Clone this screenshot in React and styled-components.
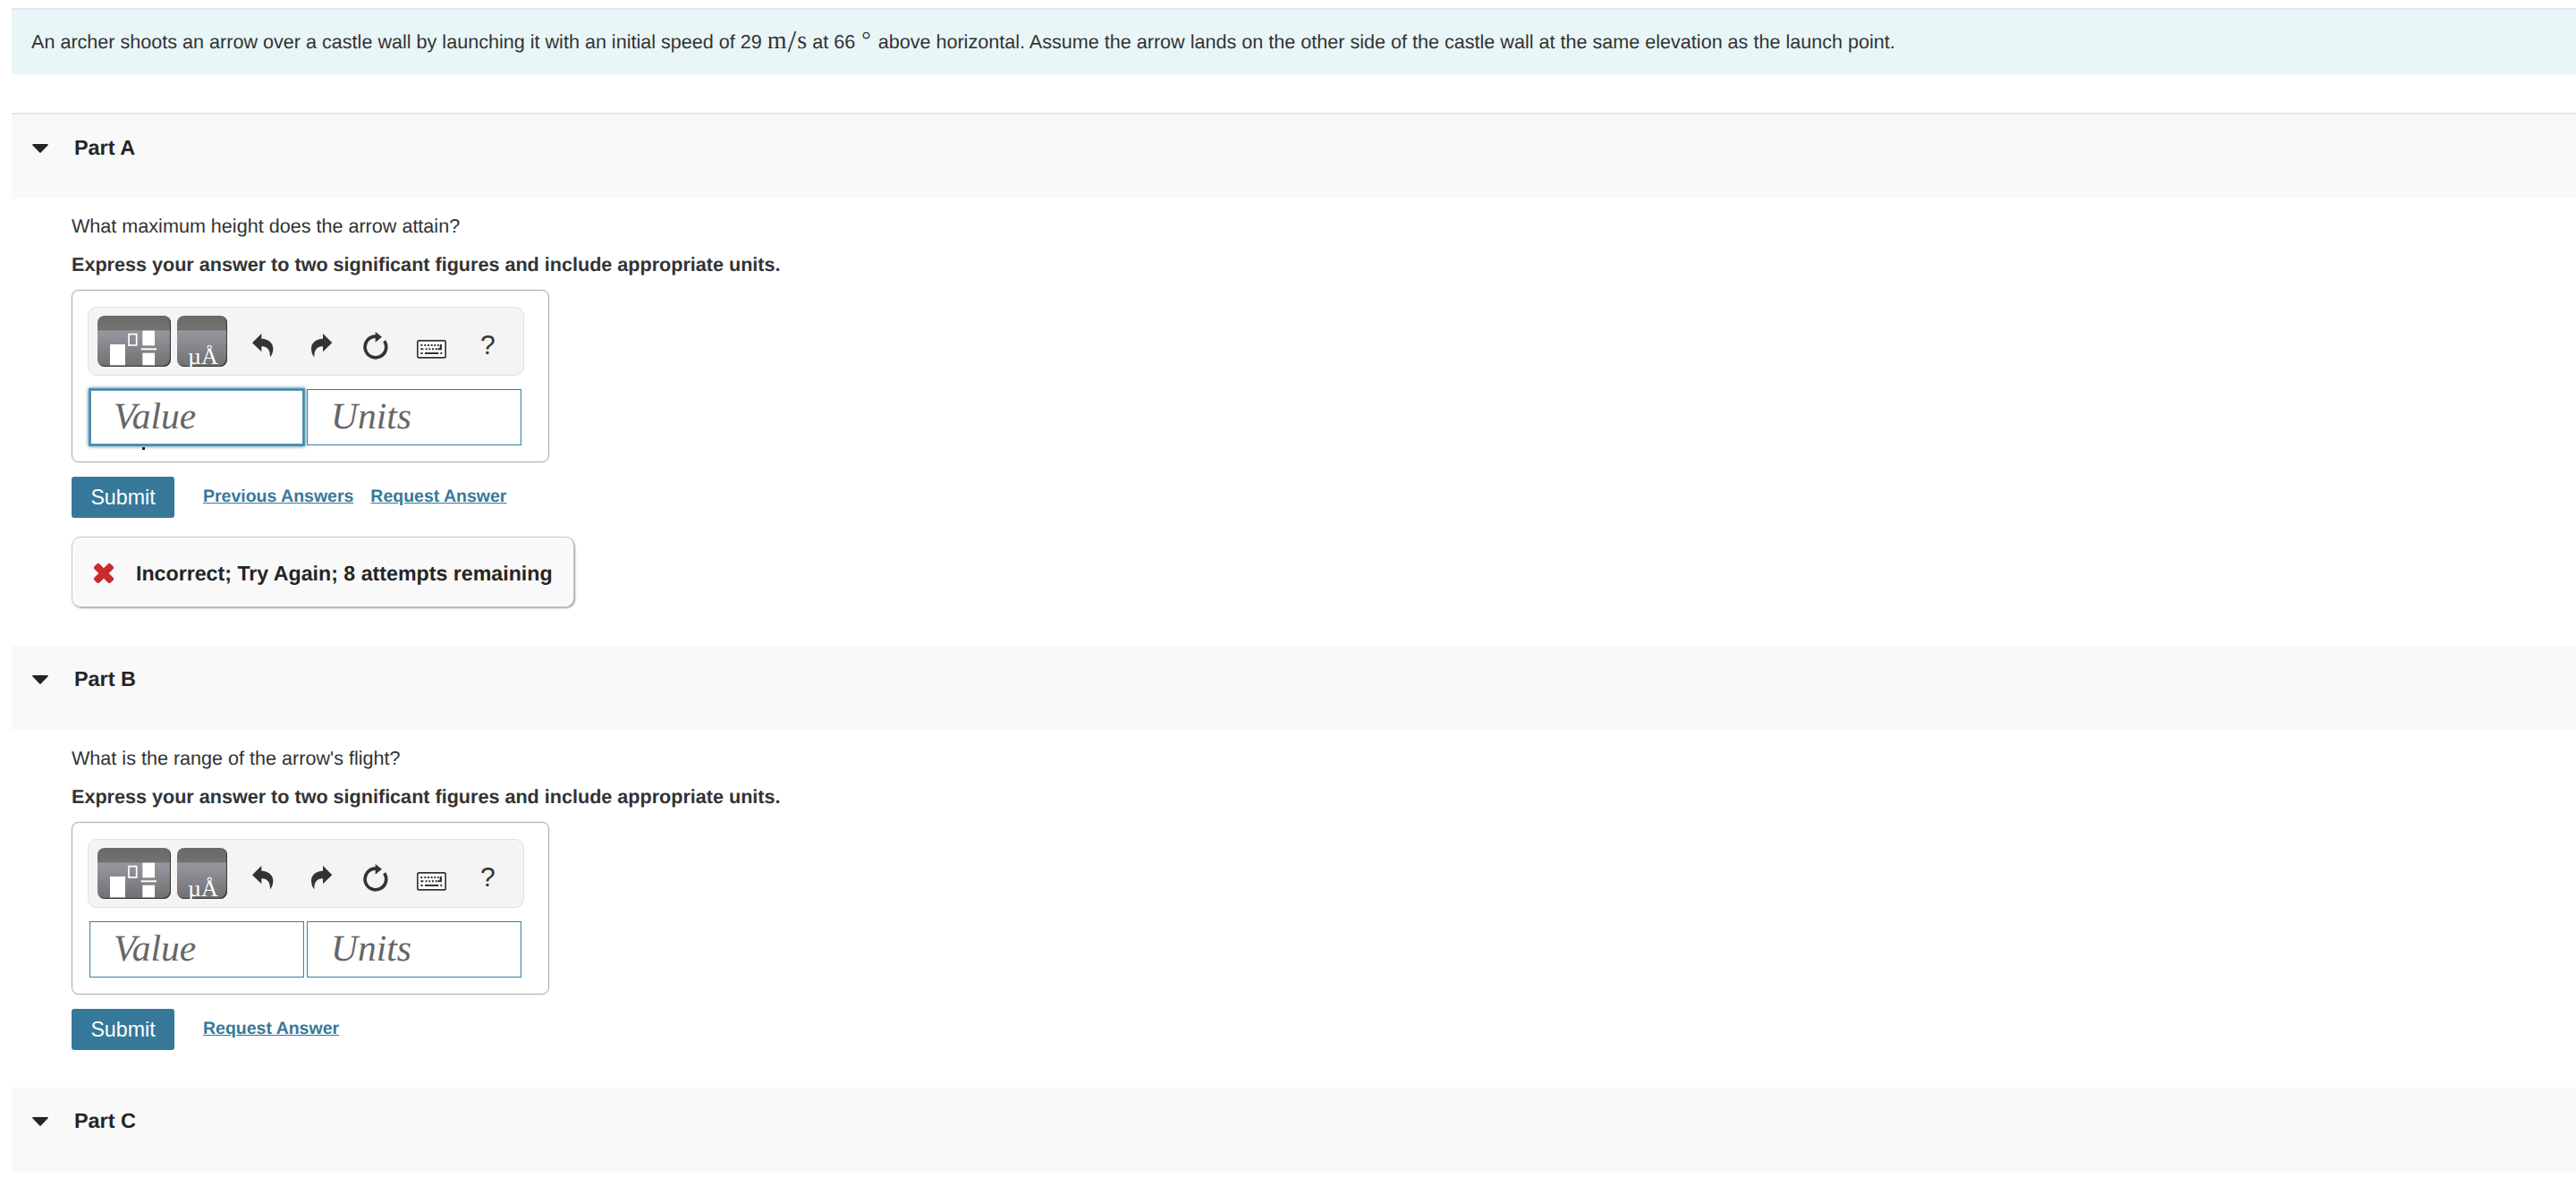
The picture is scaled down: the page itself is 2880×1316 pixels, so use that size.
import React from 'react'
import styled, { createGlobalStyle } from 'styled-components';

const parts = [
    {
        id: 'A',
        question: 'What maximum height does the arrow attain?',
        focused: true,
        links: ['Previous Answers', 'Request Answer'],
        feedback: 'Incorrect; Try Again; 8 attempts remaining',
    },
    {
        id: 'B',
        question: "What is the range of the arrow's flight?",
        focused: false,
        links: ['Request Answer'],
    },
    { id: 'C' },
];

function App() {
  return (
    <Page>
      <GlobalStyle />
      <Problem>
        An archer shoots an arrow over a castle wall by launching it with an initial speed of 29{' '}
        <Unit>m<Slash>/</Slash>s</Unit> at 66 <Degree>°</Degree> above horizontal. Assume the arrow
        lands on the other side of the castle wall at the same elevation as the launch point.
      </Problem>
      {parts.map((part, i) => (
        <Part key={part.id} part={part} first={i === 0} />
      ))}
    </Page>
  )
}

function Part({ part, first }) {
  return (
    <section>
      <PartHeader $line={first}>
        <Caret viewBox="0 0 18 10"><path d="M1 0H17Q18.2 0.4 17.5 1.4L9.8 9.4Q9 10.2 8.2 9.4L0.5 1.4Q-0.2 0.4 1 0Z" /></Caret>
        <h2>Part {part.id}</h2>
      </PartHeader>
      {part.question && (
        <PartBody $first={first}>
          <p>{part.question}</p>
          <Instruction>Express your answer to two significant figures and include appropriate units.</Instruction>
          <AnswerBox>
            <Toolbar />
            <Fields>
              <Field $focused={part.focused}>Value</Field>
              <Field>Units</Field>
              {part.focused && <Dot />}
            </Fields>
          </AnswerBox>
          <Actions>
            <Submit>Submit</Submit>
            {part.links.map((link) => (
              <Link key={link} href="#">{link}</Link>
            ))}
          </Actions>
          {part.feedback && (
            <Feedback>
              <Cross viewBox="0 0 22 22">
                <rect x="-1.8" y="7" width="25.6" height="8" rx="2" transform="rotate(45 11 11)" />
                <rect x="-1.8" y="7" width="25.6" height="8" rx="2" transform="rotate(-45 11 11)" />
              </Cross>
              {part.feedback}
            </Feedback>
          )}
        </PartBody>
      )}
    </section>
  )
}

function Toolbar() {
  return (
    <Tools>
      <Palette $width={82}>
        <svg width="82" height="57" viewBox="0 0 246 171" fill="#fff">
          <rect x="42" y="96" width="51" height="70" />
          <rect x="105" y="62" width="26" height="37" fill="none" stroke="#fff" strokeWidth="5" />
          <rect x="151" y="50" width="41" height="50" />
          <rect x="146" y="109" width="52" height="6" />
          <rect x="151" y="125" width="41" height="41" />
        </svg>
      </Palette>
      <Palette $width={56}><Symbols>µÅ</Symbols></Palette>
      <ToolIcon $left={21} $top={29} width="24" height="27" viewBox="0 0 72 81">
        <path d="M0 31L31 0V17C55 17 70 32 70 50C70 62 66 72 60 79C60 60 56 44 31 43V61Z" />
      </ToolIcon>
      <ToolIcon $left={42} $top={29} width="24" height="27" viewBox="0 0 72 81">
        <path d="M70 31L39 0V17C15 17 0 32 0 50C0 62 4 72 10 79C10 60 14 44 39 43V61Z" />
      </ToolIcon>
      <ToolIcon $left={34} $top={27} width="28" height="31" viewBox="0 0 84 93">
        <path d="M71 31A35.5 35.5 0 1 1 42 15.5" fill="none" stroke="#333" strokeWidth="11" />
        <path d="M41 0L63 17L41 35Z" />
      </ToolIcon>
      <ToolIcon $left={32} $top={36} width="33" height="21" viewBox="0 0 99 63">
        <rect x="2.5" y="2.5" width="94" height="57" rx="5" fill="#fff" stroke="#333" strokeWidth="5" />
        <path d="M13 15h6v6h-6zM25 15h6v6h-6zM36 15h6v6h-6zM47 15h6v6h-6zM58 15h6v6h-6zM69 15h5v6h-5zM77 15h7v19h-14v-6h7z" />
        <path d="M13 28h9v6h-9zM29 28h6v6h-6zM40 28h6v6h-6zM51 28h6v6h-6zM62 28h6v6h-6z" />
        <path d="M13 42h7v6h-7zM27 42h46v6h-46zM79 42h6v6h-6z" />
      </ToolIcon>
      <Help>?</Help>
    </Tools>
  )
}

const GlobalStyle = createGlobalStyle`
  *{
    box-sizing: border-box;
  }
  body{
    margin: 0;
    background: white;
    color: #333;
    font-family: "Liberation Sans", Arial, sans-serif;
    font-size: 21.58px;
    line-height: 30px;
    text-rendering: geometricPrecision;
  }
  p, h2{
    margin: 0;
  }
`;

const Page = styled.main`
  min-height: 1316px;
  padding: 9px 0 0 13px;
`;

const Problem = styled.div`
  height: 74px;
  margin-bottom: 43px;
  padding: 21px 22px;
  background: #e9f6f7;
  border-top: 2px solid #dfe8e8;
`;

const Unit = styled.span`
  font-family: "Liberation Serif", serif;
  font-size: 28px;
  line-height: 0;
`;

const Slash = styled.span`
  display: inline-block;
  margin: 0 1px;
  font-size: 35px;
  line-height: 0;
  transform: translateY(4px);
`;

const Degree = styled.span`
  display: inline-block;
  margin: 0 2px 0 1px;
  font-family: "Liberation Serif", serif;
  font-size: 26px;
  line-height: 0;
  transform: translateY(-1px);
`;

const PartHeader = styled.header`
  display: flex;
  align-items: flex-start;
  height: ${(props) => (props.$line ? '96px' : '94px')};
  padding: 22px 0 0 23px;
  background: #f9f9f9;
  border-top: ${(props) => (props.$line ? '2px solid #e6e6e6' : 'none')};
  color: #252525;
  h2{
    font-size: 23.4px;
    font-weight: 700;
  }
`;

const Caret = styled.svg`
  width: 18px;
  height: 10px;
  margin: 11px 29px 0 0;
  fill: #252525;
`;

const PartBody = styled.div`
  padding: ${(props) => (props.$first ? '16px 0 43px 67px' : '17px 0 42px 67px')};
`;

const Instruction = styled.p`
  padding: 13px 0;
  font-weight: 700;
`;

const AnswerBox = styled.div`
  width: 534px;
  height: 193px;
  padding: 18px 17px;
  border: 1px solid #adadad;
  border-radius: 8px;
  box-shadow: 0 0 1px rgba(0, 0, 0, 0.3);
`;

const Tools = styled.div`
  display: flex;
  align-items: flex-start;
  width: 488px;
  height: 77px;
  padding-left: 10px;
  background: #f4f4f4;
  border: 1px solid #e0e0e0;
  border-radius: 10px;
`;

const Palette = styled.div`
  flex: none;
  width: ${(props) => props.$width}px;
  height: 57px;
  margin: 9px 7px 0 0;
  overflow: hidden;
  border-radius: 8px;
  background: linear-gradient(#696969, #727272 16px, #9897a0 17px, #717173 56px);
  box-shadow: inset -1px -1px 1px #333;
  svg{
    display: block;
  }
`;

const Symbols = styled.div`
  padding: 28px 0 0 12px;
  color: white;
  font-family: "Liberation Serif", serif;
  font-size: 26px;
  line-height: 35px;
  white-space: nowrap;
`;

const ToolIcon = styled.svg`
  flex: none;
  margin-top: ${(props) => props.$top}px;
  margin-left: ${(props) => props.$left}px;
  fill: #333;
`;

const Help = styled.span`
  margin: 28px 0 0 38px;
  font-size: 30px;
`;

const Fields = styled.div`
  position: relative;
  display: flex;
  gap: 3px;
  margin: 15px 0 0 2px;
`;

const Field = styled.div`
  width: 240px;
  height: 63px;
  padding-left: 26px;
  border: 1px solid #3f86a6;
  box-shadow: ${(props) => (props.$focused ? '0 0 0 1px #5a98b4, 0 0 4px 1px #367a9b, inset 0 0 0 1px #5a98b4' : 'inset 0 0 1px #3f86a6')};
  color: #666;
  font-family: "Liberation Serif", serif;
  font-size: 41.5px;
  font-style: italic;
  line-height: 58px;
`;

const Dot = styled.i`
  position: absolute;
  left: 59px;
  top: 65px;
  width: 3px;
  height: 3px;
  background: #222;
`;

const Actions = styled.div`
  display: flex;
  margin-top: 16px;
`;

const Submit = styled.button`
  width: 115px;
  height: 46px;
  margin-right: 13px;
  padding: 0;
  border: none;
  border-radius: 3px;
  background: #367899;
  color: white;
  font-family: inherit;
  font-size: 23.2px;
`;

const Link = styled.a`
  margin: 7px 0 0 19px;
  color: #367899;
  font-size: 19.5px;
  font-weight: 700;
  text-decoration: underline;
`;

const Feedback = styled.div`
  display: flex;
  align-items: center;
  width: 562px;
  height: 79px;
  margin-top: 21px;
  padding: 2px 0 0 24px;
  background: #f9f9f9;
  border: 1px solid #c9c9c9;
  border-radius: 10px;
  box-shadow: 1px 1px 2px rgba(0, 0, 0, 0.4);
  color: #252525;
  font-size: 23.2px;
  font-weight: 700;
`;

const Cross = styled.svg`
  width: 22px;
  height: 22px;
  margin-right: 25px;
  fill: #cb2a2f;
`;

export default App
